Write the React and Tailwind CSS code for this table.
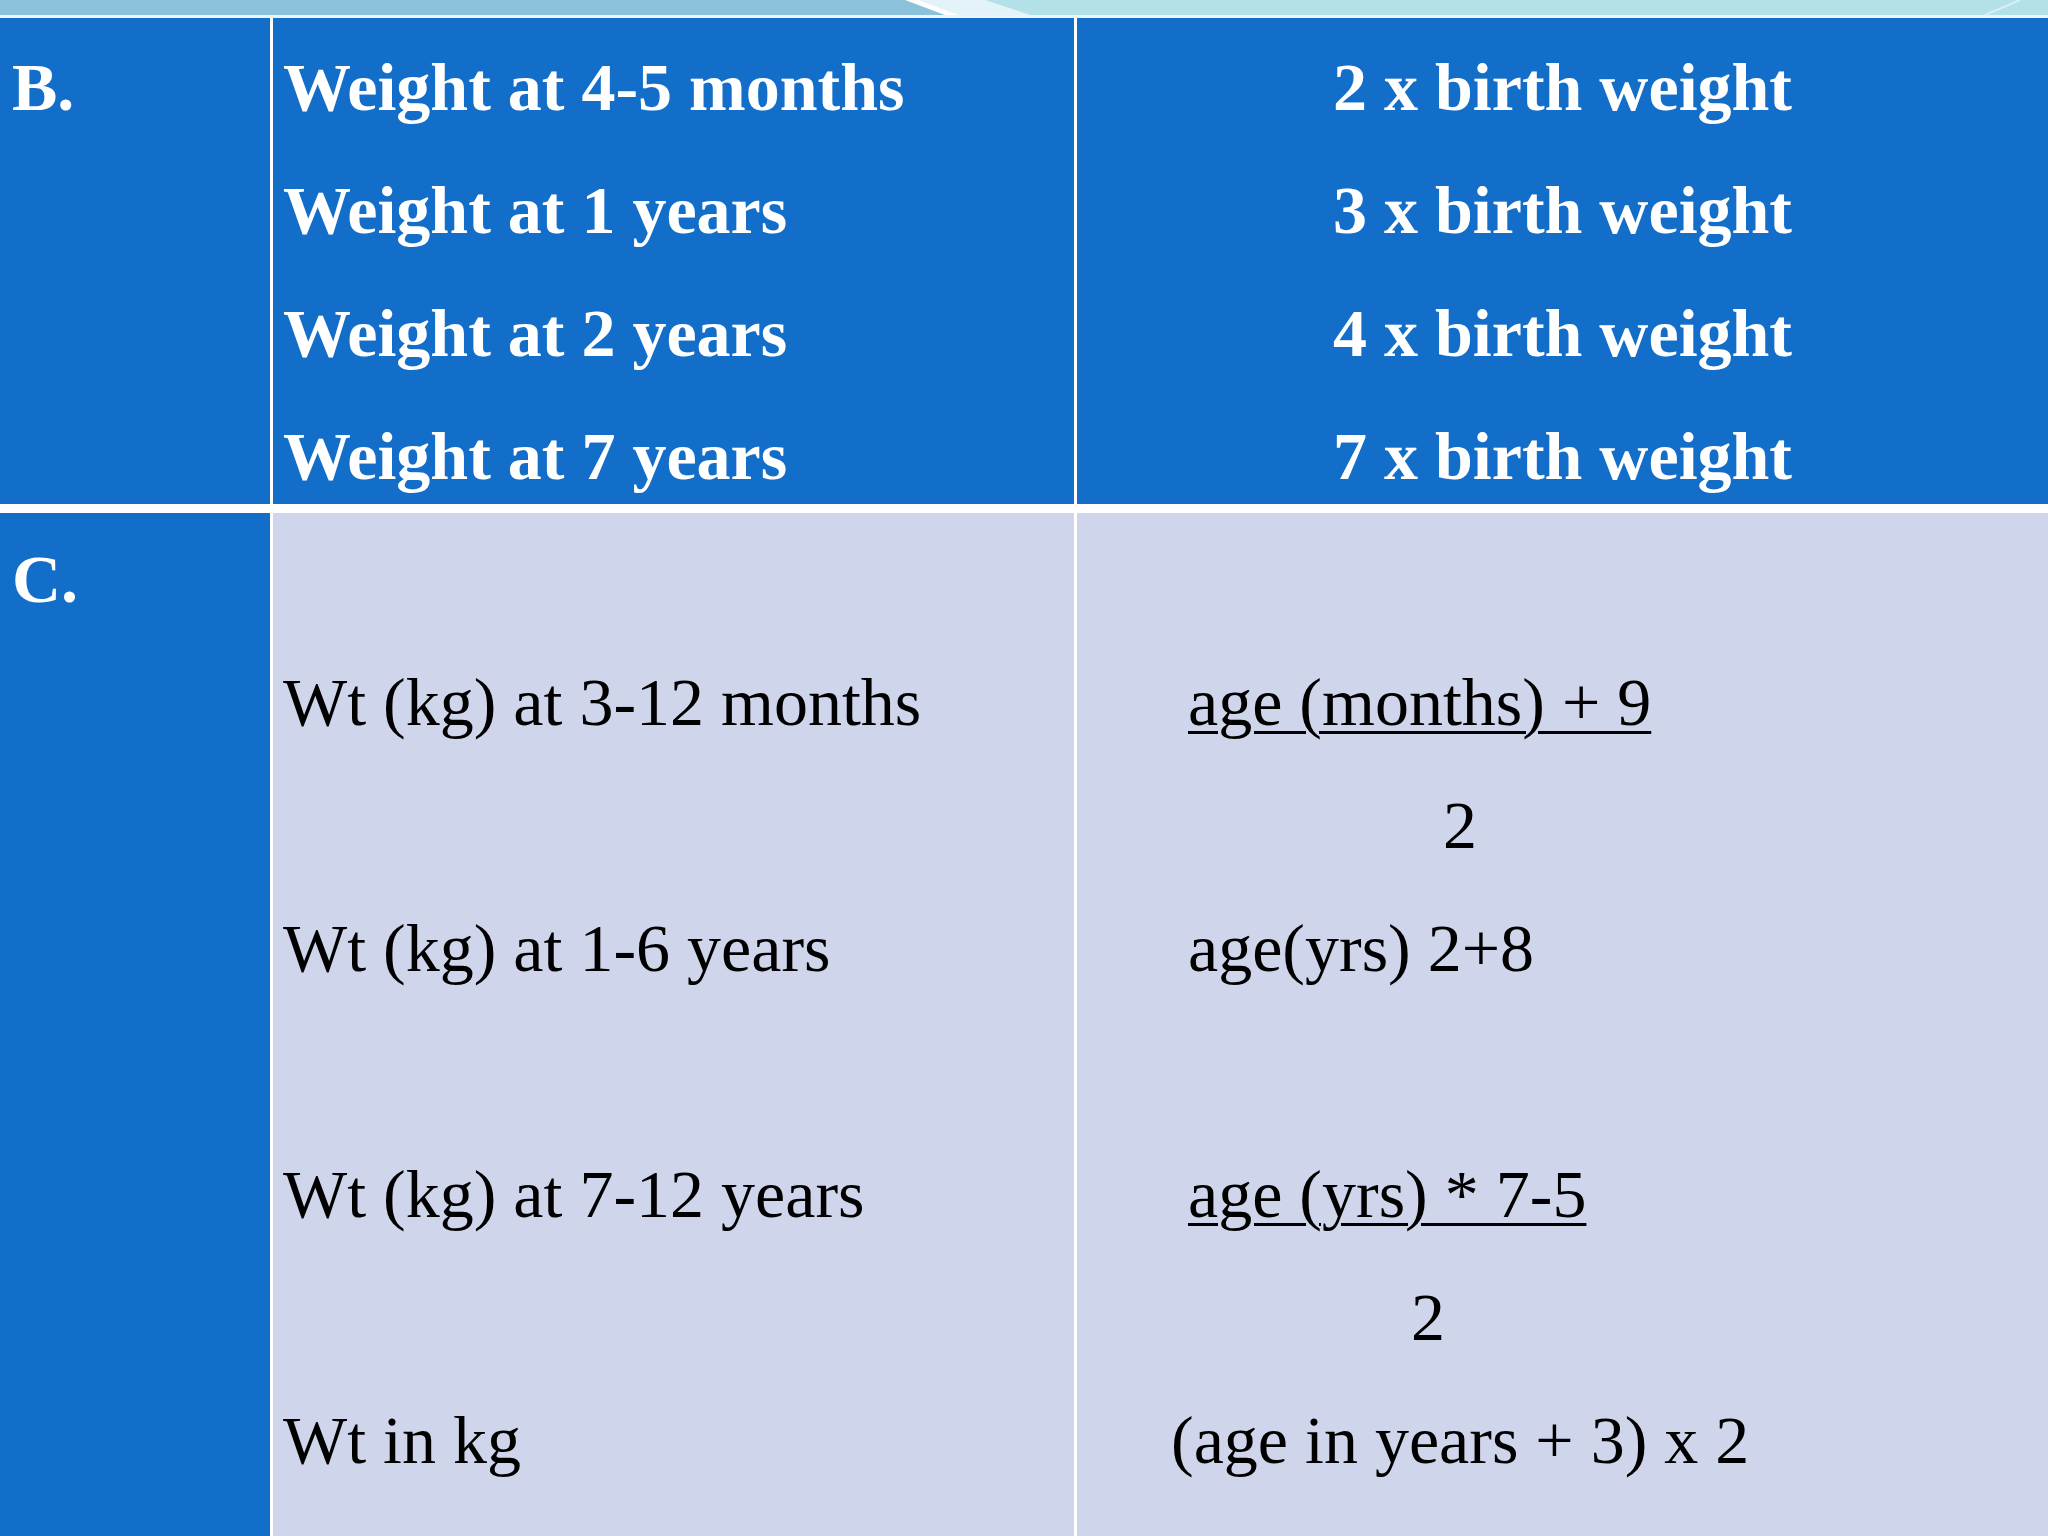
import React from "react";

const serif = "font-['Liberation_Serif','Times_New_Roman',serif]";

const rowB = [
	["Weight at 4-5 months", "2 x birth weight"],
	["Weight at 1 years", "3 x birth weight"],
	["Weight at 2 years", "4 x birth weight"],
	["Weight at 7 years", "7 x birth weight"],
];

// each line of row C: label in the middle column, formula in the right one
const rowC = [
	{ left: "", right: null },
	{ left: "Wt (kg) at 3-12 months", right: { text: "age (months) + 9", pad: "pl-[111px]", underline: true } },
	{ left: "", right: { text: "2", pad: "pl-[366px]" } },
	{ left: "Wt (kg) at 1-6 years", right: { text: "age(yrs) 2+8", pad: "pl-[111px]" } },
	{ left: "", right: null },
	{ left: "Wt (kg) at 7-12 years", right: { text: "age (yrs) * 7-5", pad: "pl-[111px]", underline: true } },
	{ left: "", right: { text: "2", pad: "pl-[334px]" } },
	{ left: "Wt in kg", right: { text: "(age in years + 3) x 2", pad: "pl-[94px]" } },
];

const Line = ({ children, className = "" }) => (
	<div className={`h-[80px] leading-[80px] whitespace-nowrap ${className}`}>
		{children}
	</div>
);

const Banner = () => (
	<svg
		className="block w-full h-[15px]"
		viewBox="0 0 2048 15"
		preserveAspectRatio="none"
	>
		<rect x="0" y="0" width="2048" height="15" fill="#ffffff" />
		<polygon points="0,0 905,0 945,15 0,15" fill="#8cc1db" />
		<polygon points="918,0 985,0 1030,15 958,15" fill="#e4f3f8" />
		<polygon points="985,0 2048,0 2048,15 1030,15" fill="#b2e1e8" />
		<line x1="1985" y1="15" x2="2020" y2="0" stroke="#d8f0f4" strokeWidth="2" />
	</svg>
);

export default function App() {
	return (
		<div className={`w-[2048px] h-[1536px] overflow-hidden bg-white ${serif}`}>
			<Banner />
			<div className="h-[3px] bg-[#e8f6fa]" />

			<div className="grid grid-cols-[270px_801px_1fr] grid-rows-[486px_1023px] gap-x-[3px] gap-y-[9px] bg-white text-[68px]">
				{/* row B */}
				<div className="bg-[#126ec8] pt-[29px] pl-[12px] font-bold text-white">
					<Line>B.</Line>
				</div>
				<div className="bg-[#126ec8] pt-[29px] pl-[10px] flex flex-col gap-[43px] font-bold text-white">
					{rowB.map(([label]) => (
						<Line key={label}>{label}</Line>
					))}
				</div>
				<div className="bg-[#126ec8] pt-[29px] flex flex-col gap-[43px] font-bold text-white text-center">
					{rowB.map(([label, value]) => (
						<Line key={label}>{value}</Line>
					))}
				</div>

				{/* row C */}
				<div className="bg-[#126ec8] pt-[26px] pl-[12px] font-bold text-white">
					<Line>C.</Line>
				</div>
				<div className="bg-[#cfd5ea] pt-[26px] pl-[10px] flex flex-col gap-[43px] text-black">
					{rowC.map((row, i) => (
						<Line key={i}>{row.left}</Line>
					))}
				</div>
				<div className="bg-[#cfd5ea] pt-[26px] flex flex-col gap-[43px] text-black">
					{rowC.map((row, i) => (
						<Line key={i} className={row.right ? row.right.pad : ""}>
							{row.right && (
								<span className={row.right.underline ? "underline decoration-[3px] underline-offset-[6px]" : ""}>
									{row.right.text}
								</span>
							)}
						</Line>
					))}
				</div>
			</div>
		</div>
	);
}
